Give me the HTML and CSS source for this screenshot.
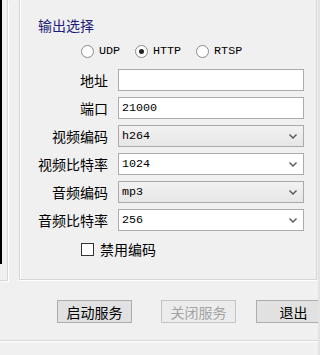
FILE: index.html
```html
<!DOCTYPE html>
<html lang="zh">
<head>
  <meta charset="UTF-8" />
  <title>输出选择</title>
  <link rel="stylesheet" href="styles.css">
</head>
<body>
  <div class="ventana">
    <div class="superior">
      <div class="lateral"><div class="barra"></div></div>
      <div class="grupo">
        <div class="titulo">输出选择</div>
        <div class="radios">
          <label class="radio"><span class="circulo"></span>UDP</label>
          <label class="radio"><span class="circulo marcado"></span>HTTP</label>
          <label class="radio"><span class="circulo"></span>RTSP</label>
        </div>
        <div class="formulario">
          <span class="etiqueta">地址</span>
          <div class="campo"></div>
          <span class="etiqueta">端口</span>
          <div class="campo">21000</div>
          <span class="etiqueta">视频编码</span>
          <div class="campo combo">h264<svg class="flecha" width="8" height="5" viewBox="0 0 8 5"><path d="M0.5 0.5 L4 4 L7.5 0.5" fill="none" stroke="#555" stroke-width="1.4"/></svg></div>
          <span class="etiqueta">视频比特率</span>
          <div class="campo editable">1024<svg class="flecha" width="8" height="5" viewBox="0 0 8 5"><path d="M0.5 0.5 L4 4 L7.5 0.5" fill="none" stroke="#555" stroke-width="1.4"/></svg></div>
          <span class="etiqueta">音频编码</span>
          <div class="campo combo">mp3<svg class="flecha" width="8" height="5" viewBox="0 0 8 5"><path d="M0.5 0.5 L4 4 L7.5 0.5" fill="none" stroke="#555" stroke-width="1.4"/></svg></div>
          <span class="etiqueta">音频比特率</span>
          <div class="campo editable">256<svg class="flecha" width="8" height="5" viewBox="0 0 8 5"><path d="M0.5 0.5 L4 4 L7.5 0.5" fill="none" stroke="#555" stroke-width="1.4"/></svg></div>
        </div>
        <label class="check"><span class="cuadro"></span>禁用编码</label>
      </div>
    </div>
    <div class="botones">
      <button class="boton">启动服务</button>
      <button class="boton desactivado" disabled>关闭服务</button>
      <button class="boton salir">退出</button>
    </div>
    <div class="pie"></div>
  </div>
</body>
</html>
```

FILE: styles.css
```css
body {
  margin: 0;
  padding: 0;
  background: #f0f0f0;
  font-family: "Noto Sans CJK SC", "Noto Sans", sans-serif;
  font-size: 14px;
  color: #000;
  overflow: hidden;
}

.ventana {
  width: 320px;
  height: 355px;
  box-sizing: border-box;
  border-right: 2px solid #e3e3e3;
  overflow: hidden;
}

.superior {
  display: flex;
  height: 281px;
}

.lateral {
  width: 7px;
  height: 280px;
  border-right: 1px solid #d6d6d6;
  border-bottom: 1px solid #d6d6d6;
  box-shadow: 1px 1px 0 #fff;
}

.barra {
  width: 2px;
  height: 264px;
  background: #000;
}

.grupo {
  flex: 1;
  margin-left: 11px;
  margin-right: 1px;
  height: 280px;
  box-sizing: border-box;
  border-left: 1px solid #d6d6d6;
  border-right: 1px solid #d6d6d6;
  border-bottom: 1px solid #d6d6d6;
  box-shadow: inset 1px 0 0 #fff, 0 1px 0 #fff;
}

.titulo {
  margin: 17px 0 0 18px;
  line-height: 16px;
  color: #1e1e78;
}

.radios {
  display: flex;
  gap: 15px;
  margin: 10px 0 0 61px;
  height: 16px;
  align-items: center;
}

.radio {
  display: flex;
  align-items: center;
  gap: 5px;
  font-family: "Liberation Mono", "Courier New", serif;
  font-size: 11.7px;
}

.circulo {
  width: 11px;
  height: 11px;
  border: 1px solid #8a8a8a;
  border-radius: 50%;
  background: #fff;
  display: flex;
  align-items: center;
  justify-content: center;
}

.marcado::after {
  content: "";
  width: 5px;
  height: 5px;
  border-radius: 50%;
  background: #222;
}

.formulario {
  display: grid;
  grid-template-columns: 88px 186px;
  column-gap: 10px;
  row-gap: 6px;
  margin-top: 10px;
}

.etiqueta {
  text-align: right;
  line-height: 22px;
  height: 22px;
}

.campo {
  height: 22px;
  box-sizing: border-box;
  border: 1px solid #ababab;
  background: #fff;
  padding-left: 3px;
  font-family: "Liberation Mono", "Courier New", serif;
  font-size: 11.7px;
  line-height: 20px;
  display: flex;
  align-items: center;
}

.combo {
  background: linear-gradient(#f2f2f2, #e6e6e6);
}

.flecha {
  margin-left: auto;
  margin-right: 6px;
}

.check {
  display: flex;
  align-items: center;
  gap: 6px;
  margin: 10px 0 0 61px;
  height: 16px;
}

.cuadro {
  width: 11px;
  height: 11px;
  border: 1px solid #333;
  background: #fff;
}

.botones {
  display: flex;
  margin-top: 19px;
  padding-left: 57px;
  height: 23px;
}

.boton {
  width: 75px;
  height: 23px;
  flex-shrink: 0;
  border: 1px solid #adadad;
  background: #e1e1e1;
  font-family: "Noto Sans CJK SC", sans-serif;
  font-size: 14px;
  padding: 0;
  line-height: 20px;
  color: #000;
}

.desactivado {
  margin-left: 29px;
  border-color: #c4c4c4;
  background: #ececec;
  color: #a3a3a3;
}

.salir {
  margin-left: 20px;
}

.pie {
  margin-top: 17px;
  border-top: 1px solid #d6d6d6;
  box-shadow: 0 1px 0 #fff;
}
```
